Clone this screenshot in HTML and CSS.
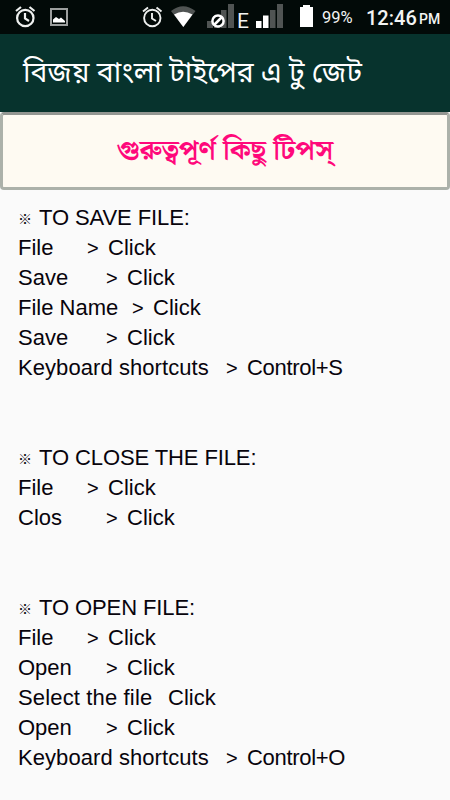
FILE: index.html
```html
<!DOCTYPE html>
<html lang="bn">

<head>
    <meta charset="UTF-8">
    <meta name="viewport" content="width=device-width, initial-scale=1.0">
    <title>বিজয় বাংলা টাইপের এ টু জেট</title>
    <link rel="stylesheet" href="styles.css">
</head>

<body>
    <div class="status-bar">
        <svg class="status-icons" width="320" height="34" viewBox="0 0 320 34">
            <!-- alarm clocks -->
            <g fill="none" stroke="#eef0ef" stroke-width="2.2">
                <circle cx="25.3" cy="18" r="8.2" />
                <path d="M25 13v5.5l4 2.5M16 11l5-4M34.500 11l-5-4" />
            </g>
            <g fill="none" stroke="#eef0ef" stroke-width="1.9">
                <circle cx="152.3" cy="18" r="8.2" />
                <path d="M152 13v5.500l4 2.500M143 11.500l5-4M161.500 11.500l-5-4" />
            </g>
            <!-- picture -->
            <rect x="51" y="9" width="16" height="16" fill="none" stroke="#9c9f9e" stroke-width="2" />
            <path d="M53 22.500v-3l3-2.500 3 2 2-1.500 4 3.500v1.500z" fill="#fff" />
            <!-- wifi -->
            <path d="M171 11Q183 1.500 195.500 11L183.300 27z" fill="#505453" />
            <path d="M174 14.500Q183 9 192.500 14.500L183.300 27z" fill="#fff" />
            <!-- signal, first sim -->
            <path d="M207 21h6v7h-6zM214 15h6v13h-6zM221 10h5.500v18h-5.500zM228 4h6v24h-6z" fill="#505453" />
            <circle cx="218" cy="21" r="5.600" fill="#020a08" stroke="#fff" stroke-width="2.500" />
            <path d="M214 25l8-8" stroke="#fff" stroke-width="2.500" />
            <!-- signal, second sim -->
            <path d="M256 21h5.500v7h-5.500zM263 15.500h5.500v12.500h-5.500z" fill="#fff" />
            <path d="M270 10h5.500v18h-5.500zM277 4h6v24h-6z" fill="#505453" />
            <!-- battery -->
            <path d="M300 7h3V5h7v2h3v20h-13z" fill="#fff" />
        </svg>
        <span class="network">E</span>
        <span class="battery">99%</span>
        <span class="clock">12:46</span>
        <span class="period">PM</span>
    </div>

    <div class="app-bar">
        <h1>বিজয় বাংলা টাইপের এ টু জেট</h1>
    </div>

    <div class="banner">
        <h2>গুরুত্বপূর্ণ কিছু টিপস্</h2>
    </div>

    <div class="tips">
        <div class="tip">
            <p class="tip-title"><span class="mark">※</span><span>TO SAVE FILE:</span></p>
            <p><span class="short">File</span><span class="arrow">&gt;</span><span>Click</span></p>
            <p><span class="medium">Save</span><span class="arrow">&gt;</span><span>Click</span></p>
            <p><span class="long">File Name</span><span class="arrow">&gt;</span><span>Click</span></p>
            <p><span class="medium">Save</span><span class="arrow">&gt;</span><span>Click</span></p>
            <p><span class="full">Keyboard shortcuts</span><span class="arrow">&gt;</span><span class="keys">Control+S</span></p>
        </div>

        <div class="tip">
            <p class="tip-title"><span class="mark">※</span><span>TO CLOSE THE FILE:</span></p>
            <p><span class="short">File</span><span class="arrow">&gt;</span><span>Click</span></p>
            <p><span class="medium">Clos</span><span class="arrow">&gt;</span><span>Click</span></p>
        </div>

        <div class="tip">
            <p class="tip-title"><span class="mark">※</span><span>TO OPEN FILE:</span></p>
            <p><span class="short">File</span><span class="arrow">&gt;</span><span>Click</span></p>
            <p><span class="medium">Open</span><span class="arrow">&gt;</span><span>Click</span></p>
            <p><span class="select">Select the file</span><span>Click</span></p>
            <p><span class="medium">Open</span><span class="arrow">&gt;</span><span>Click</span></p>
            <p><span class="full">Keyboard shortcuts</span><span class="arrow">&gt;</span><span class="keys">Control+O</span></p>
        </div>
    </div>
</body>

</html>
```
FILE: styles.css
```css
body {
    font-family: "Liberation Sans", Arial, sans-serif;
    background-color: #fafafa;
    color: #08040c;
    margin: 0;
    padding: 0;
    height: 800px;
    overflow: hidden;
}

h1,
h2,
p {
    margin: 0;
}

.status-bar {
    position: relative;
    display: flex;
    height: 34px;
    background-color: #020a08;
    color: #f2f4f3;
    font-family: Roboto, sans-serif;
    line-height: 36px;
    white-space: nowrap;
}

.status-icons {
    flex: none;
}

/* network letter sits between the two signal icons */
.network {
    position: absolute;
    left: 237px;
    top: 3px;
    font-size: 21px;
}

.battery {
    width: 44px;
    margin-left: 2px;
    font-size: 16.5px;
}

.clock {
    width: 53px;
    font-size: 20px;
    font-weight: 500;
}

.period {
    font-size: 14px;
    font-weight: 500;
    line-height: 39px;
}

.app-bar {
    display: flex;
    align-items: center;
    height: 78px;
    padding-left: 23px;
    background-color: #07332d;
    color: #fff;
}

h1 {
    padding-top: 3px;
    font-family: "Noto Sans Bengali", "Noto Sans", sans-serif;
    font-size: 28.3px;
    font-weight: 400;
    white-space: nowrap;
}

.banner {
    display: flex;
    align-items: center;
    justify-content: center;
    box-sizing: border-box;
    height: 78px;
    background-color: #fefaf2;
    border: 3px solid #acb1aa;
    border-top-color: #939692;
    border-radius: 4px;
}

h2 {
    color: #ff087b;
    font-family: "Noto Serif Bengali", "Noto Sans Bengali", "Noto Sans", serif;
    font-size: 27.8px;
    font-weight: 700;
    white-space: nowrap;
}

.tips {
    padding: 13px 18px 0;
    font-size: 22px;
    line-height: 30px;
}

.tip {
    margin-bottom: 60px;
}

.tip p {
    display: flex;
    height: 30px;
    white-space: nowrap;
}

.tip-title {
    letter-spacing: -0.1px;
}

.mark {
    width: 21px;
    font-family: "Noto Sans CJK KR", sans-serif;
    font-size: 14px;
    font-weight: 700;
}

.short {
    width: 69px;
}

.medium {
    width: 88px;
}

.long {
    width: 114px;
}

.select {
    width: 150px;
    letter-spacing: 0.15px;
}

.full {
    width: 208px;
    letter-spacing: 0.07px;
}

.arrow {
    width: 21px;
    font-size: 20px;
}

.keys {
    letter-spacing: -0.3px;
}
```
